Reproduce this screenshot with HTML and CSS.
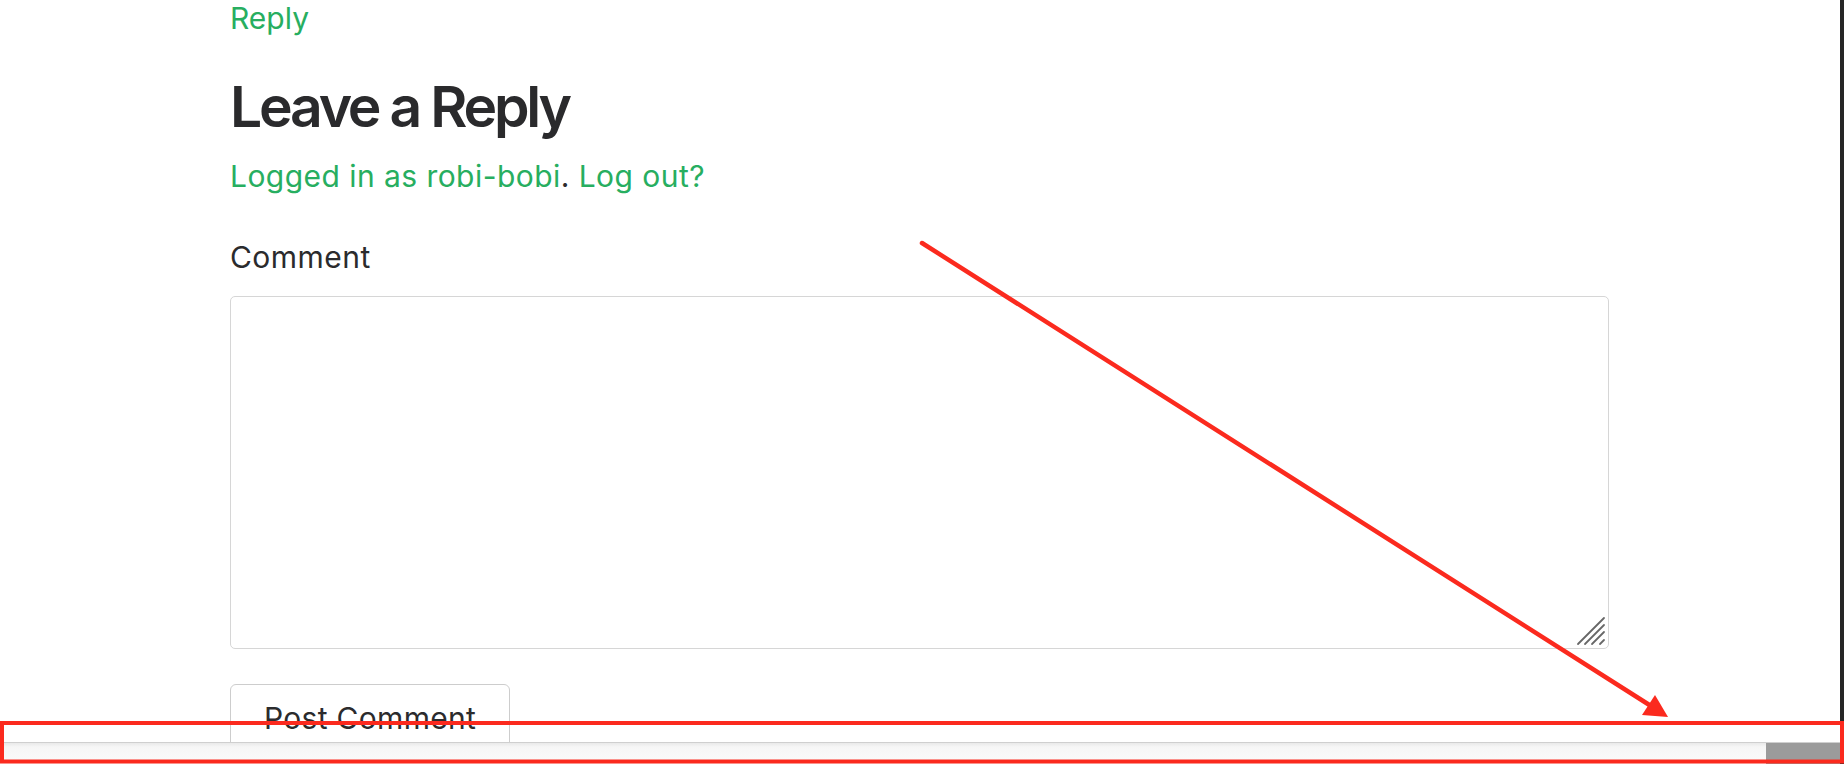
FILE: index.html
```html
<!DOCTYPE html>
<html lang="en">
<head>
<meta charset="utf-8">
<title>Leave a Reply</title>
<link rel="stylesheet" href="styles.css">
</head>
<body>
<main class="content">
  <a class="reply-link" href="#">Reply</a>
  <section class="respond">
    <h2 class="respond-title">Leave a Reply</h2>
    <p class="logged-in"><a href="#">Logged in as robi-bobi</a>. <a href="#">Log out?</a></p>
    <form class="comment-form">
      <label class="comment-label" for="comment">Comment</label>
      <div class="textarea-wrap">
        <textarea id="comment" class="comment-input"></textarea>
        <svg class="grip" width="30" height="30" viewBox="0 0 30 30" aria-hidden="true">
          <g stroke="#676767" stroke-width="1.8" stroke-linecap="round">
            <line x1="2" y1="28" x2="28" y2="2"/>
            <line x1="9" y1="28" x2="28" y2="9"/>
            <line x1="16" y1="28" x2="28" y2="16"/>
            <line x1="24" y1="28" x2="28" y2="24"/>
          </g>
        </svg>
      </div>
      <button class="submit" type="button">Post Comment</button>
    </form>
  </section>
</main>

<div class="hscroll">
  <div class="hscroll-thumb"></div>
</div>
<div class="edge-strip"></div>

<svg class="annotation" width="1844" height="764" viewBox="0 0 1844 764" aria-hidden="true">
  <line x1="922" y1="243" x2="1651" y2="706" stroke="#fb2a1e" stroke-width="4.5" stroke-linecap="round"/>
  <polygon points="1668,717 1655,695 1642,715" fill="#fb2a1e"/>
  <rect x="2" y="723" width="1840" height="38.5" fill="none" stroke="#fb2a1e" stroke-width="4"/>
</svg>
</body>
</html>
```

FILE: styles.css
```css
html, body {
  margin: 0;
  padding: 0;
  background: #ffffff;
  overflow: hidden;
  height: 764px;
}

body {
  font-family: Inter, "Liberation Sans", Arial, sans-serif;
  color: #2b2b2d;
}

a {
  color: #27ae60;
  text-decoration: none;
}

.content {
  width: 1379px;
  padding-left: 230px;
  padding-top: 0;
  display: flex;
  flex-direction: column;
}

.reply-link {
  font-size: 30px;
  line-height: 36px;
  align-self: flex-start;
}

.respond {
  margin-top: 39px;
}

.respond-title {
  margin: 0;
  font-size: 57px;
  line-height: 64px;
  font-weight: 600;
  letter-spacing: -3.2px;
  color: #2a2a2c;
}

.logged-in {
  margin: 19px 0 0;
  font-size: 30px;
  line-height: 36px;
  letter-spacing: 0.45px;
  color: #2b2b2d;
}

.comment-form {
  margin-top: 45px;
  display: flex;
  flex-direction: column;
  align-items: flex-start;
}

.comment-label {
  font-size: 30px;
  line-height: 36px;
  letter-spacing: 0.45px;
  color: #2b2b2d;
}

.textarea-wrap {
  position: relative;
  margin-top: 21px;
  width: 1379px;
  height: 353px;
}

.comment-input {
  display: block;
  box-sizing: border-box;
  width: 100%;
  height: 100%;
  margin: 0;
  border: 1.5px solid #d6d6d6;
  border-radius: 5px;
  resize: none;
  background: #ffffff;
  outline: none;
}

.grip {
  position: absolute;
  right: 3px;
  bottom: 3px;
}

.submit {
  margin-top: 35px;
  box-sizing: border-box;
  height: 64px;
  padding: 3px 33px 0;
  border: 1.5px solid #cdcdcd;
  border-radius: 6px;
  background: #ffffff;
  font-family: Inter, "Liberation Sans", Arial, sans-serif;
  font-size: 30px;
  line-height: 58px;
  letter-spacing: 0.3px;
  color: #2b2b2d;
}

.hscroll {
  position: fixed;
  left: 0;
  right: 4px;
  bottom: 0;
  height: 21px;
  background: linear-gradient(#e9e9e9 0, #f6f6f6 4px, #fbfbfb 100%);
  border-top: 1px solid #cfcfcf;
  display: flex;
  justify-content: flex-end;
}

.hscroll-thumb {
  width: 74px;
  height: 100%;
  background: #9b9b9b;
}

.edge-strip {
  position: fixed;
  top: 0;
  right: 0;
  width: 4px;
  height: 764px;
  background: #262626;
}

.annotation {
  position: fixed;
  left: 0;
  top: 0;
  pointer-events: none;
}
```
